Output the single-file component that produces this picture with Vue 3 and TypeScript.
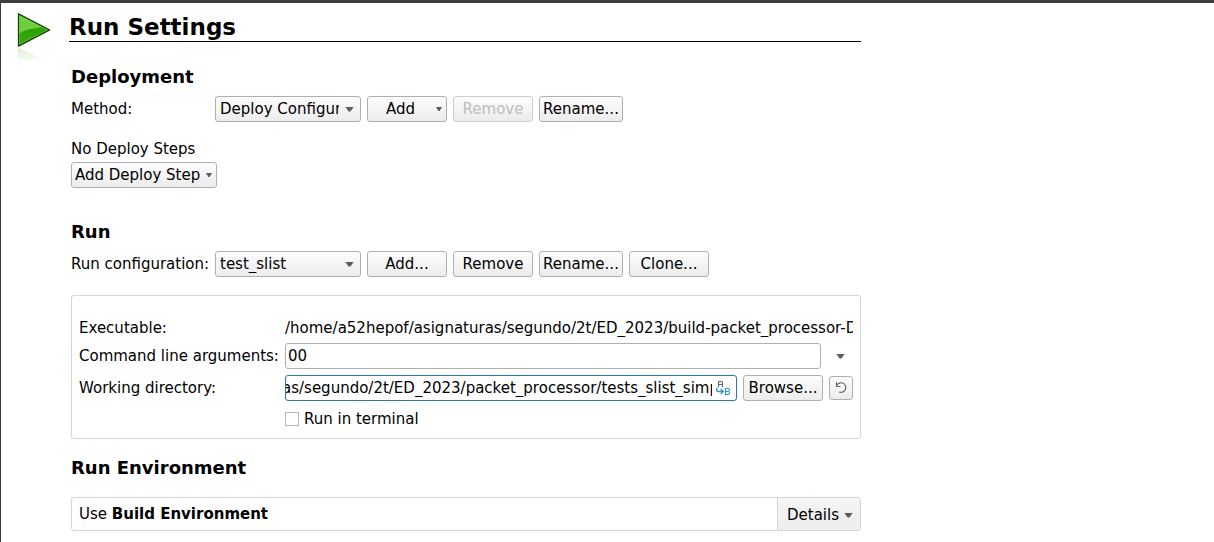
<script setup lang="ts">
import { ref } from 'vue'

const executable = '/home/a52hepof/asignaturas/segundo/2t/ED_2023/build-packet_processor-Desktop-Debug/tests'
const args = ref('00')
const workingDir = 'as/segundo/2t/ED_2023/packet_processor/tests_slist_simple'
const runInTerminal = ref(false)
</script>

<template>
  <div class="window">
    <header class="title-row">
      <svg class="play" width="36" height="50" viewBox="0 0 36 50">
        <defs>
          <linearGradient id="face" x1="0" y1="0" x2="0" y2="1">
            <stop offset="0" stop-color="#5fd02c" />
            <stop offset="0.5" stop-color="#2fa004" />
            <stop offset="1" stop-color="#3cab10" />
          </linearGradient>
          <linearGradient id="shine" x1="0" y1="0" x2="0" y2="1">
            <stop offset="0" stop-color="#6ad337" />
            <stop offset="1" stop-color="#6fcb48" />
          </linearGradient>
          <linearGradient id="mirror" x1="0" y1="0" x2="0" y2="1">
            <stop offset="0" stop-color="#58b83a" stop-opacity="0.25" />
            <stop offset="1" stop-color="#58b83a" stop-opacity="0" />
          </linearGradient>
        </defs>
        <path d="M2 35.500 L28 48 L2 50Z" fill="url(#mirror)" />
        <path d="M2.500 1.800 V34.200 L33.700 18Z" fill="url(#face)" />
        <path d="M3 2.500 V22 C9 16.500 17 17.500 26 14.500Z" fill="url(#shine)" />
        <path d="M3.500 3.500 V32.500 L31.500 18Z" fill="none" stroke="#9be873" stroke-opacity=".4" />
        <path d="M2.500 1.800 V34.200 L33.700 18Z" fill="none" stroke="#163e08" stroke-width="1.300" stroke-linejoin="round" />
      </svg>
      <h1>Run Settings</h1>
    </header>

    <main>
      <h2 class="h-deploy">Deployment</h2>
      <div class="row">
        <span class="label">Method:</span>
        <button class="btn combo"><span class="value">Deploy Configuration</span><i class="arrow big"></i></button>
        <button class="btn menu"><span>Add</span><i class="arrow"></i></button>
        <button class="btn" disabled>Remove</button>
        <button class="btn wide">Rename...</button>
      </div>
      <div class="steps">No Deploy Steps</div>
      <button class="btn step"><span>Add Deploy Step</span><i class="arrow"></i></button>

      <h2 class="h-run">Run</h2>
      <div class="row">
        <span class="label">Run configuration:</span>
        <button class="btn combo"><span class="value">test_slist</span><i class="arrow big"></i></button>
        <button class="btn">Add...</button>
        <button class="btn">Remove</button>
        <button class="btn wide">Rename...</button>
        <button class="btn">Clone...</button>
      </div>

      <section class="panel">
        <div class="field exec">
          <span class="name">Executable:</span>
          <span class="path">{{ executable }}</span>
        </div>
        <div class="field">
          <span class="name">Command line arguments:</span>
          <input v-model="args" class="edit" type="text" spellcheck="false" />
          <span class="expand"><i class="arrow big"></i></span>
        </div>
        <div class="field dir">
          <span class="name">Working directory:</span>
          <div class="edit focused">
            <div class="dir-clip"><span class="dir-text">{{ workingDir }}</span></div>
            <svg class="vars" width="16" height="16" viewBox="0 0 16 16" fill="none">
              <path d="M3.500 7 V2.500 Q3.500 1.500 4.500 1.500 H6.500 Q7.500 1.500 7.500 2.500 V7 M3.500 4.500 H7.500" stroke="#66696b" stroke-width="1.200" />
              <path d="M2.800 7.800 Q1.500 8.200 1.500 9.700 Q1.500 11.500 3.500 11.500 H8 M5.700 9 L8.200 11.500 L5.700 14" stroke="#2f93d2" stroke-width="1.300" />
              <path d="M10.500 8.500 H13.300 Q14.500 8.500 14.500 10 Q14.500 11.500 13.300 11.500 H10.500 M13.300 11.500 Q14.500 11.500 14.500 13 Q14.500 14.500 13.300 14.500 H10.500 V8.500" stroke="#2f93d2" stroke-width="1.200" />
            </svg>
          </div>
          <button class="btn browse">Browse...</button>
          <button class="btn reset" aria-label="Reset">
            <svg width="14" height="14" viewBox="0 0 14 14" fill="none" stroke="#68696a">
              <path d="M2.500 4.500 C4.500 1.500 8 1 10.200 2.900 C12.500 5 12.200 8.500 10 10.300 C8.800 11.300 7 11.700 5 11" stroke-width="1.200" />
              <path d="M2.500 1 V5.500 H6.500" stroke-width="1.200" />
            </svg>
          </button>
        </div>
        <label class="check"><input v-model="runInTerminal" type="checkbox" /><span>Run in terminal</span></label>
      </section>

      <h2 class="h-env">Run Environment</h2>
      <section class="env">
        <span class="env-text">Use <b>Build Environment</b></span>
        <button class="details"><span>Details</span><i class="arrow big"></i></button>
      </section>
    </main>
  </div>
</template>

<style>
body {
  background: #fff;
  overflow: hidden;
}
</style>

<style scoped>
* {
  box-sizing: border-box;
}
.window {
  height: 542px;
  overflow: hidden;
  border-top: 3px solid #3c3c3e;
  border-left: 1px solid #3c3c3e;
  background: #fff;
  color: #000;
  font: 15px/18px "DejaVu Sans", sans-serif;
  white-space: nowrap;
}
button,
input {
  margin: 0;
  font: inherit;
  color: inherit;
}
.title-row {
  display: flex;
  height: 58px;
}
.play {
  flex: none;
  margin: 9px 17px 0 15px;
}
h1 {
  width: 792px;
  height: 39px;
  margin: 0;
  padding-top: 10px;
  border-bottom: 1px solid #000;
  font-size: 23px;
  line-height: 28px;
}
main {
  display: flex;
  flex-direction: column;
  align-items: flex-start;
  width: 790px;
  margin-left: 70px;
}
h2 {
  margin: 0;
  font-size: 18px;
  line-height: 22px;
}
.h-deploy {
  margin-top: 5px;
}
.h-run {
  margin-top: 33px;
}
.h-env {
  margin-top: 18px;
}
.row {
  display: flex;
  gap: 6px;
  height: 26px;
  margin-top: 8px;
  align-items: center;
}
.label {
  width: 138px;
}
.btn {
  display: flex;
  align-items: center;
  justify-content: center;
  width: 80px;
  height: 26px;
  padding: 0;
  border: 1px solid #aeafb0;
  border-radius: 3px;
  background: linear-gradient(#fdfdfd, #ececec);
  white-space: nowrap;
}
.btn:disabled {
  border-color: #cdcdcd;
  color: #bebebe;
}
.btn.wide {
  width: 84px;
}
.btn.combo {
  width: 146px;
  justify-content: space-between;
  padding: 0 6px 0 4px;
}
.value {
  width: 119px;
  margin-right: auto;
  overflow: hidden;
  text-align: left;
}
.arrow {
  flex: none;
  width: 6px;
  height: 4px;
  background: #5c5c5c;
  clip-path: polygon(0 0, 100% 0, 60% 100%, 40% 100%);
}
.arrow.big {
  width: 9px;
  height: 5px;
}
.btn.menu {
  justify-content: flex-end;
  gap: 21px;
  padding-right: 4px;
}
.steps {
  margin-top: 18px;
  height: 18px;
}
.btn.step {
  width: 146px;
  margin-top: 4px;
  justify-content: space-between;
  padding: 0 4px 0 3px;
}
.panel {
  width: 790px;
  height: 144px;
  margin-top: 18px;
  padding: 21px 7px 0;
  border: 1px solid #d5d5d5;
  border-radius: 3px;
}
.field {
  display: flex;
  align-items: center;
  height: 26px;
}
.field.exec {
  height: 22px;
  margin-bottom: 4px;
}
.field.dir {
  margin-top: 6px;
}
.name {
  flex: none;
  width: 206px;
}
.path {
  flex: 1;
  overflow: hidden;
}
.edit {
  width: 536px;
  height: 26px;
  padding: 0 2px;
  border: 1px solid #aeafb0;
  border-radius: 3px;
  background: #fff;
  outline: none;
}
.edit.focused {
  display: flex;
  align-items: center;
  width: 452px;
  padding: 0;
  border-color: #2a78a8;
}
.dir-clip {
  width: 426px;
  margin-right: 3px;
  overflow: hidden;
}
.dir-text {
  display: block;
  margin-left: -4px;
}
.vars {
  flex: none;
}
.expand {
  display: flex;
  margin-left: 15px;
}
.btn.browse {
  margin-left: 6px;
}
.btn.reset {
  width: 24px;
  height: 24px;
  margin-left: 6px;
}
.check {
  display: flex;
  align-items: center;
  gap: 5px;
  height: 18px;
  margin: 9px 0 0 206px;
}
.check input {
  appearance: none;
  width: 14px;
  height: 14px;
  border: 1px solid #b6b6b6;
  background: #fff;
}
.env {
  display: flex;
  justify-content: space-between;
  width: 790px;
  height: 34px;
  margin-top: 18px;
  border: 1px solid #d5d5d5;
  border-radius: 3px;
}
.env-text {
  padding: 7px 0 0 7px;
}
.details {
  display: flex;
  align-items: center;
  gap: 5px;
  width: 83px;
  padding: 2px 0 0 9px;
  border: 0;
  border-left: 1px solid #d5d5d5;
  background: linear-gradient(#f5f5f5, #ededed);
}
</style>
